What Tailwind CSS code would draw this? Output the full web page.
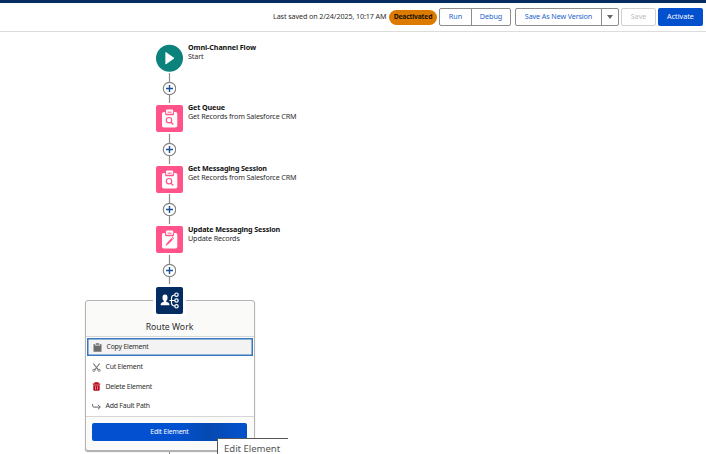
<!DOCTYPE html>
<html lang="en">
<head>
<meta charset="utf-8">
<title>Flow Builder</title>
<script src="https://cdn.jsdelivr.net/npm/@tailwindcss/browser@4"></script>
</head>
<body class="w-[706px] h-[454px] overflow-hidden bg-white flex flex-col font-['Noto_Sans','Open_Sans',sans-serif] text-[#2e2e2e]">
<svg class="hidden">
  <symbol id="plus" viewBox="0 0 14 32">
    <path d="M7.500 0v10M7.500 22v8" stroke="#8c8c8c" stroke-width="1.2"/>
    <circle cx="7.500" cy="15.500" r="6.200" fill="#fff" stroke="#858585" stroke-width="1.200"/>
    <path d="M7.500 12v7M4 15.500h7" stroke="#1b5297" stroke-width="1.400"/>
  </symbol>
  <symbol id="board" viewBox="0 0 27 27">
    <rect x="6" y="7" width="15.300" height="15.500" rx="1.800" fill="#fff"/>
    <rect x="9.200" y="6" width="8.800" height="4.200" rx="1.300" fill="#ff538a"/>
    <path d="M10 5.800q0-1.200 1.200-1.200h4.800q1.200 0 1.200 1.200v2q0 1-1 1h-5.200q-1 0-1-1z" fill="#fff"/>
    <rect x="11.500" y="6.400" width="4.200" height="1.500" rx=".4" fill="#ff8db2"/>
  </symbol>
</svg>

<div class="h-[3px] shrink-0 bg-[#032d60]"></div>
<header class="h-[29px] shrink-0 flex items-center justify-end pr-[3px] border-b border-[#dcdcdc] text-[7.2px] leading-none whitespace-nowrap">
  <span class="w-[116px] tracking-[-0.11px]">Last saved on 2/24/2025, 10:17 AM</span>
  <span class="w-12 h-[15px] mr-[2px] rounded-full bg-[#dd7a01] text-[#201600] font-bold text-[6.8px] tracking-[-0.2px] flex items-center justify-center">Deactivated</span>
  <div class="h-[18px] w-[72px] mr-1 flex rounded-[2px] border border-[#8c8c8c] text-[#1b5fd0]">
    <span class="w-8 flex items-center justify-center border-r border-[#8c8c8c]">Run</span>
    <span class="flex-1 flex items-center justify-center">Debug</span>
  </div>
  <div class="h-[18px] w-[104px] mr-[2px] flex rounded-[2px] border border-[#8c8c8c] text-[#1b5fd0]">
    <span class="w-[86px] flex items-center justify-center border-r border-[#8c8c8c] tracking-[-0.12px]">Save As New Version</span>
    <span class="flex-1 flex items-center justify-center"><svg class="w-[6px] h-1" viewBox="0 0 6 4"><path d="M0 0h6L3 4z" fill="#666"/></svg></span>
  </div>
  <span class="h-[18px] w-[35px] mr-[2px] rounded-[2px] border border-[#d0d0d0] text-[#bcbcbc] flex items-center justify-center">Save</span>
  <span class="h-[18px] w-[45px] rounded-[2px] bg-[#0350cf] text-white flex items-center justify-center">Activate</span>
</header>

<main class="relative flex-1 -mt-px">
  <svg class="absolute left-[162px] top-[42px] w-[14px] h-8"><use href="#plus"/></svg>
  <svg class="absolute left-[162px] top-[102.500px] w-[14px] h-8"><use href="#plus"/></svg>
  <svg class="absolute left-[162px] top-[163px] w-[14px] h-8"><use href="#plus"/></svg>
  <svg class="absolute left-[162px] top-[223.500px] w-[14px] h-8"><use href="#plus"/></svg>

  <section class="absolute left-[156px] top-[13px] flex gap-[5px] whitespace-nowrap">
    <svg class="w-[27px] h-[28px]" viewBox="0 0 27 28"><circle cx="13.500" cy="14.200" r="13.500" fill="#0b827c"/><path d="M9.800 8.400v11.600l8.200-5.800z" fill="#fff" stroke="#fff" stroke-width=".8" stroke-linejoin="round"/></svg>
    <div class="text-[7.200px] leading-[9px] -mt-[1px]"><h2 class="font-bold text-[#111] tracking-[-0.1px]">Omni-Channel Flow</h2><p class="tracking-[-0.14px]">Start</p></div>
  </section>
  <section class="absolute left-[156px] top-[74px] flex gap-[5px] whitespace-nowrap">
    <svg class="w-[27px] h-[27px] rounded-[2px] bg-[#ff538a]" viewBox="0 0 27 27"><use href="#board"/><circle cx="13" cy="15.200" r="2.700" fill="none" stroke="#ff538a" stroke-width="1.200"/><path d="M15 17.200l2.300 2.300" stroke="#ff538a" stroke-width="1.300"/></svg>
    <div class="text-[7.200px] leading-[9px] -mt-[2px]"><h2 class="font-bold text-[#111] tracking-[-0.13px]">Get Queue</h2><p class="tracking-[-0.14px]">Get Records from Salesforce CRM</p></div>
  </section>
  <section class="absolute left-[156px] top-[135px] flex gap-[5px] whitespace-nowrap">
    <svg class="w-[27px] h-[27px] rounded-[2px] bg-[#ff538a]" viewBox="0 0 27 27"><use href="#board"/><circle cx="13" cy="15.200" r="2.700" fill="none" stroke="#ff538a" stroke-width="1.200"/><path d="M15 17.200l2.300 2.300" stroke="#ff538a" stroke-width="1.300"/></svg>
    <div class="text-[7.200px] leading-[9px] -mt-[2px]"><h2 class="font-bold text-[#111] tracking-[-0.13px]">Get Messaging Session</h2><p class="tracking-[-0.14px]">Get Records from Salesforce CRM</p></div>
  </section>
  <section class="absolute left-[156px] top-[195px] flex gap-[5px] whitespace-nowrap">
    <svg class="w-[27px] h-[27px] rounded-[2px] bg-[#ff538a]" viewBox="0 0 27 27"><use href="#board"/><path d="M11.300 17.900l4.900-5.200" stroke="#ff538a" stroke-width="2"/><path d="M9.700 19.600l.6-2.300 1.700 1.700z" fill="#ff538a"/><path d="M16.600 12.300l.8-.8" stroke="#ff538a" stroke-width="2"/></svg>
    <div class="text-[7.200px] leading-[9px] -mt-[1px]"><h2 class="font-bold text-[#111] tracking-[-0.13px]">Update Messaging Session</h2><p class="tracking-[-0.14px]">Update Records</p></div>
  </section>

  <section class="absolute left-[84.500px] top-[269px] w-[170px] h-[151px] flex flex-col rounded-[3px] border border-[#b4b4b4] bg-[#fafaf9] shadow-[0_1px_1px_#aaa]">
    <h2 class="h-[36px] shrink-0 pt-[21px] text-center text-[8.700px] leading-[11px] border-b border-[#d6d6d6]">Route Work</h2>
    <ul class="bg-white text-[6.900px] tracking-[-0.2px] leading-none flex flex-col border-b border-[#d6d6d6] h-[80px] shrink-0 pt-px">
      <li class="mx-px h-[18px] flex items-center gap-[5px] pl-[5px] border border-[#3677bd] bg-[#f3f3f3] shadow-[inset_0_0_0_0.5px_#3677bd]">
        <svg class="w-[9px] h-[9px]" viewBox="0 0 9 9"><path d="M.5 1.200h1.500v1.300h5V1.200h1.500v7.500H.5z" fill="#6c6c6c"/><path d="M2.600 1.800V1q0-.8.7-.8h2.400q.7 0 .7.800v.8z" fill="#6c6c6c"/></svg><span class="pt-px">Copy Element</span></li>
      <li class="mt-[1px] h-[20px] flex items-center gap-[5px] pl-[6px]">
        <svg class="w-[9px] h-[9px]" viewBox="0 0 9 9"><path d="M1.300.5l5 6.300M7.700.5l-5 6.300" stroke="#747474" stroke-width="1.100"/><circle cx="1.900" cy="7.300" r="1.100" fill="none" stroke="#747474" stroke-width=".9"/><circle cx="7.100" cy="7.300" r="1.100" fill="none" stroke="#747474" stroke-width=".9"/></svg><span class="pt-px">Cut Element</span></li>
      <li class="h-[19px] flex items-center gap-[5px] pl-[6px]">
        <svg class="w-[9px] h-[9px]" viewBox="0 0 9 9"><path d="M.8 2.200h7.400M3 2V.8h3V2" fill="none" stroke="#ba0517" stroke-width="1.200"/><path d="M1.300 3.200h6.400v4.600q0 1-1 1H2.300q-1 0-1-1z" fill="#ba0517"/><path d="M3.500 4.300v3.300M5.500 4.300v3.300" stroke="#f1c3c7" stroke-width=".7"/></svg><span class="pt-px">Delete Element</span></li>
      <li class="h-[20px] flex items-center gap-[5px] pl-[6px]">
        <svg class="w-[9px] h-[9px]" viewBox="0 0 9 9"><path d="M.6 2v1.800q0 1.300 1.300 1.300h6.200M5.900 2.800l2.400 2.300-2.400 2.300" fill="none" stroke="#666" stroke-width="1"/></svg><span class="pt-px">Add Fault Path</span></li>
    </ul>
    <div class="flex-1 px-[6.500px] pt-[6px]"><div class="h-[18px] rounded-[2px] bg-[linear-gradient(90deg,#0351d0_55%,#054ab2_76%,#0350c8_94%)] text-white text-[6.800px] tracking-[-0.15px] flex items-center justify-center">Edit Element</div></div>
  </section>
  <div class="absolute left-[153px] top-[253px] w-[33px] h-[33px] bg-white flex justify-center pt-[3px]">
    <svg class="w-[27px] h-[27px] rounded-[2px] bg-[#032d60]" viewBox="0 0 27 27"><g fill="#fff"><ellipse cx="9" cy="10.700" rx="2.500" ry="3.200"/><path d="M7.800 12.500h2.400v2.200q3.200.8 3.200 2.300v1.300H4.700v-1.300q0-1.500 3.100-2.300z"/></g><g fill="none" stroke="#fff" stroke-width="1.200"><path d="M13.500 13.500h5.300M18.800 8q-3.300.2-3.300 3.200v4.600q0 3 3.300 3.200"/><circle cx="20.500" cy="7.700" r="1.700"/><circle cx="20.500" cy="13.500" r="1.700"/><circle cx="20.500" cy="19.300" r="1.700"/></g></svg>
  </div>
  <div class="absolute left-[169px] top-[421px] w-px h-[3px] bg-[#8c8c8c]"></div>
  <div class="absolute left-[217px] top-[407px] w-[71px] h-4 bg-white border-t border-l border-[#555] pl-[6px] pt-[4px] text-[9.600px] leading-[11px] tracking-[-0.05px] text-[#555] whitespace-nowrap">Edit Element</div>
</main>
</body>
</html>
